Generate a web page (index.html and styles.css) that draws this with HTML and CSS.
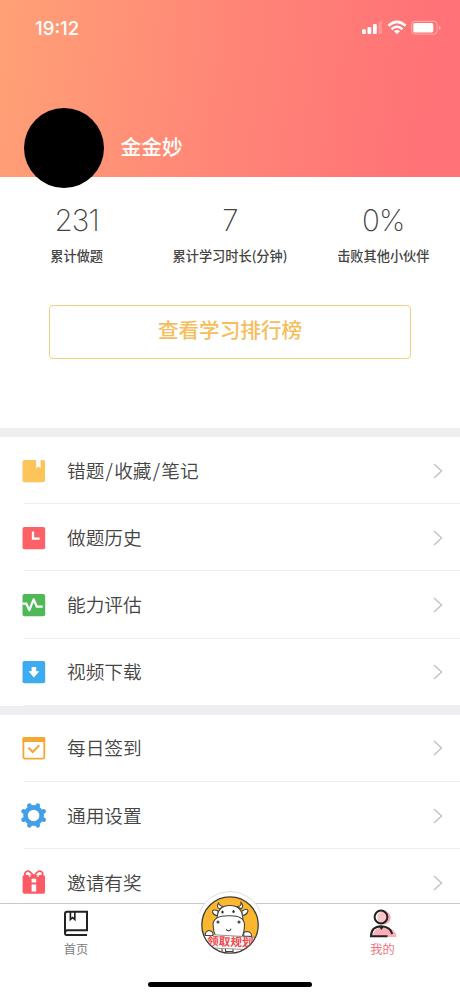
FILE: index.html
```html
<!DOCTYPE html>
<html lang="zh-CN">
<head>
    <meta charset="UTF-8">
    <title>我的</title>
    <link rel="stylesheet" href="styles.css">
</head>

<body>
    <div class="screen">
        <div class="header">
            <div class="status-bar">
                <span class="time">19:12</span>
                <svg class="status-icons" width="80" height="16" viewBox="0 0 80 16">
                    <g fill="#fff">
                        <rect x="1" y="9.3" width="3.8" height="4.7" rx="1"/>
                        <rect x="6.5" y="7" width="3.8" height="7" rx="1"/>
                        <rect x="12" y="4" width="3.8" height="10" rx="1"/>
                        <rect x="17.5" y="1.4" width="3.6" height="12.6" rx="1" opacity=".2"/>
                        <path d="M33 11.2 L36 14.3 L39 11.2 Q36 8.8 33 11.2Z"/>
                        <rect x="52.3" y="3" width="20" height="9.4" rx="1.6"/>
                        <path d="M78 5.7 V10 Q79.6 9.3 79.6 7.8 Q79.6 6.3 78 5.7Z" opacity=".5"/>
                    </g>
                    <g fill="none" stroke="#fff" stroke-width="2.5">
                        <path d="M27.4 5.8 Q36 -2 44.6 5.8"/>
                        <path d="M30.5 9.2 Q36 4.3 41.5 9.2"/>
                    </g>
                    <rect x="50.7" y="1.3" width="25.5" height="12.8" rx="3.4" fill="none" stroke="#fff" opacity=".4"/>
                </svg>
            </div>
            <div class="user">
                <div class="avatar"></div>
                <div class="name">金金妙</div>
            </div>
        </div>

        <div class="stats">
            <div class="stat">
                <div class="number">231</div>
                <div class="label">累计做题</div>
            </div>
            <div class="stat">
                <div class="number">7</div>
                <div class="label">累计学习时长(分钟)</div>
            </div>
            <div class="stat">
                <div class="number">0%</div>
                <div class="label">击败其他小伙伴</div>
            </div>
        </div>

        <div class="rank-button">查看学习排行榜</div>

        <div class="list">
            <div class="item">
                <svg class="icon" viewBox="0 0 26 26">
                    <path d="M3.5 2 H15.2 V10.5 L17.4 8.3 L19.6 10.5 V2 H22 Q24 2 24 4 V22.3 Q24 24.3 22 24.3 H3.5 Q1.5 24.3 1.5 22.3 V4 Q1.5 2 3.5 2Z" fill="#fdc45a"/>
                </svg>
                <div class="item-text">错题<span class="slash">/</span>收藏<span class="slash">/</span>笔记</div>
                <svg class="arrow" viewBox="0 0 10 16"><path d="M1 1 L8.5 8 L1 15"/></svg>
            </div>
            <div class="item">
                <svg class="icon" viewBox="0 0 26 26">
                    <rect x="1.5" y="2" width="22.7" height="22.3" rx="2" fill="#fb6166"/>
                    <path d="M12 6.5 V13.7 H18.7" fill="none" stroke="#fff" stroke-width="2.3"/>
                </svg>
                <div class="item-text">做题历史</div>
                <svg class="arrow" viewBox="0 0 10 16"><path d="M1 1 L8.5 8 L1 15"/></svg>
            </div>
            <div class="item">
                <svg class="icon" viewBox="0 0 26 26">
                    <rect x="1.5" y="2" width="22.7" height="22.3" rx="2" fill="#4fb957"/>
                    <path d="M1.5 11.7 H5.3 L8.4 18.2 L12.6 7.3 L15.8 14.7 H21.7" fill="none" stroke="#fff" stroke-width="2.2" stroke-linejoin="round"/>
                </svg>
                <div class="item-text">能力评估</div>
                <svg class="arrow" viewBox="0 0 10 16"><path d="M1 1 L8.5 8 L1 15"/></svg>
            </div>
            <div class="item">
                <svg class="icon" viewBox="0 0 26 26">
                    <rect x="1.5" y="2" width="22.7" height="22.3" rx="2" fill="#3eabf1"/>
                    <path d="M10.6 8 H15.2 V12.2 H18.3 L12.9 18.4 L7.5 12.2 H10.6Z" fill="#fff"/>
                </svg>
                <div class="item-text">视频下载</div>
                <svg class="arrow" viewBox="0 0 10 16"><path d="M1 1 L8.5 8 L1 15"/></svg>
            </div>
        </div>

        <div class="list list-last">
            <div class="item">
                <svg class="icon" viewBox="0 0 26 26">
                    <rect x="2.4" y="3" width="20.9" height="20.6" rx="1.5" fill="none" stroke="#f4a731" stroke-width="1.8"/>
                    <path d="M3 2 H22.7 Q24.2 2 24.2 3.5 V7 H1.5 V3.5 Q1.5 2 3 2Z" fill="#f4a731"/>
                    <path d="M7.5 12.7 L11.7 17 L18.3 10.2" fill="none" stroke="#f4a731" stroke-width="2"/>
                </svg>
                <div class="item-text">每日签到</div>
                <svg class="arrow" viewBox="0 0 10 16"><path d="M1 1 L8.5 8 L1 15"/></svg>
            </div>
            <div class="item">
                <svg class="icon" viewBox="0 0 26 26">
                    <circle cx="12.6" cy="12.5" r="8.1" fill="none" stroke="#429fe8" stroke-width="4.6"/>
                    <g stroke="#429fe8" stroke-width="4.6" stroke-linecap="round">
                        <path d="M16.3 3.9 L16.8 2.7 M8.9 3.9 L8.4 2.7 M16.3 21.1 L16.8 22.3 M8.9 21.1 L8.4 22.3"/>
                        <path d="M21.2 8.8 L22.6 8.3 M21.2 16.2 L22.6 16.7 M4 8.8 L2.6 8.3 M4 16.2 L2.6 16.7"/>
                    </g>
                </svg>
                <div class="item-text">通用设置</div>
                <svg class="arrow" viewBox="0 0 10 16"><path d="M1 1 L8.5 8 L1 15"/></svg>
            </div>
            <div class="item">
                <svg class="icon" viewBox="0 0 26 26">
                    <rect x="1.6" y="4.9" width="22.4" height="18.9" rx="1.8" fill="#fb5b64"/>
                    <path d="M12.8 6.3 Q9 .3 5.8 1.3 Q2.4 3.1 5 6.1 M12.8 6.3 Q16.6 .3 19.8 1.3 Q23.2 3.1 20.6 6.1" fill="none" stroke="#fb5b64" stroke-width="1.8"/>
                    <path d="M7 4.7 L10.4 5.9 L8.4 6.9Z M18.6 4.7 L15.2 5.9 L17.2 6.9Z M10.6 8.7 H15.2 V12.5 H10.6Z M10.6 14.5 H15.2 V21.4 H10.6Z" fill="#fff"/>
                </svg>
                <div class="item-text">邀请有奖</div>
                <svg class="arrow" viewBox="0 0 10 16"><path d="M1 1 L8.5 8 L1 15"/></svg>
            </div>
        </div>

        <div class="tab-bar">
            <div class="tab">
                <svg class="tab-icon" viewBox="0 0 30 30">
                    <g fill="none" stroke="#222" stroke-width="2">
                        <path d="M26 27 H5.5 Q4 27 4 25 V6 Q4 3.8 6.2 3.8 H26 V22.3 H6.5 Q4 22.3 4 25"/>
                        <path d="M9.4 4 V11.4 L11.6 9.5 L13.8 11.4 V4" stroke-width="1.7"/>
                    </g>
                </svg>
                <div class="tab-text">首页</div>
            </div>
            <div class="tab tab-active">
                <svg class="tab-icon" viewBox="0 0 30 30">
                    <circle cx="18" cy="9.8" r="6.8" fill="#f8b0b6"/>
                    <path d="M6.5 29 Q8 19.5 17 18.8 Q29 19 30.6 29Z" fill="#f8b0b6"/>
                    <g fill="none" stroke="#222" stroke-width="2">
                        <circle cx="15" cy="9" r="6.4" fill="#fff" fill-opacity=".25"/>
                        <path d="M21.5 28.2 H5 Q5.3 18.5 15.2 18.3 Q24.6 18.8 26.2 26"/>
                    </g>
                    <path d="M12.6 18 H18.2 L15.4 22Z" fill="#222"/>
                </svg>
                <div class="tab-text">我的</div>
            </div>
            <svg class="mascot" width="80" height="75" viewBox="0 0 80 75">
                <defs>
                    <clipPath id="face"><circle cx="40" cy="40" r="28"/></clipPath>
                </defs>
                <circle cx="40" cy="39" r="32.3" fill="#fff"/>
                <path d="M9.5 27.7 A32.5 32.5 0 0 1 70.5 27.7" fill="none" stroke="#ddd"/>
                <circle cx="40" cy="40" r="28" fill="#fcb72f"/>
                <g clip-path="url(#face)" stroke="#444" stroke-width="1.1" fill="#fff">
                    <path d="M29.5 24 Q26 22 28.5 18 Q30 21.5 33.5 21.5Z M47.5 21.5 Q51.5 21.5 51 17.5 Q54.5 21 51 24Z"/>
                    <path d="M28 26 Q22.5 23.5 22.5 27 Q23.5 30.5 28 30.5Z M52 26 Q57.5 22.5 58 26 Q57 30 52 30.5Z"/>
                    <path d="M27 36 Q26.5 20.5 40 20.5 Q53 20.5 53 36Z"/>
                    <path d="M26 52 Q23 46 23 39 Q24 30.3 39 30.7 Q53.5 30.3 54.5 39 Q54.5 47 52 52Z"/>
                    <path d="M24 60 H57 V72 H24Z"/>
                    <path d="M32 63 V72 M35.5 63 V66.5 H43 V63" fill="none"/>
                    <path d="M12 49 L68 52.5 L67.5 65 L11.5 62.5Z" stroke="#999"/>
                    <path d="M15 50.5 Q15.5 46 19 45.5 Q23.5 46 23 50.5Z M54 51 Q52.5 46.5 57 46.5 Q62 47 61.5 51.5Z"/>
                    <g fill="#222" stroke="none">
                        <ellipse cx="32.5" cy="27" rx="1.1" ry="1.6"/>
                        <ellipse cx="43.5" cy="26.5" rx="1.1" ry="1.6"/>
                    </g>
                    <g fill="#777"><circle cx="28" cy="37" r="1"/><circle cx="49" cy="37" r="1"/></g>
                    <path d="M36 44.5 Q39.5 47.5 41 43.8" fill="none"/>
                </g>
                <circle cx="40" cy="40" r="28.2" fill="none" stroke="#403b36" stroke-width="1.3"/>
                <g clip-path="url(#face)">
                    <text class="mascot-text" x="17" y="60" transform="rotate(2.5 17 60)">领取规划</text>
                </g>
            </svg>
            <div class="home-indicator"></div>
        </div>
    </div>
</body>
</html>
```

FILE: styles.css
```css
body {
    margin: 0;
    font-family: "Noto Sans CJK SC", sans-serif;
    color: #444;
    background: #fff;
}

.screen {
    width: 460px;
    height: 996px;
    display: flex;
    flex-direction: column;
    overflow: hidden;
}

.header {
    height: 177px;
    flex: none;
    background: linear-gradient(97deg, #ffa176 0%, #ff8577 50%, #ff7277 92%);
}

.status-bar {
    display: flex;
    justify-content: space-between;
    align-items: center;
    height: 56px;
    padding: 0 19px 0 35px;
    color: #fff;
}

.time {
    font: 550 18.6px/24px Inter, sans-serif;
}

.user {
    display: flex;
    align-items: center;
    padding: 52px 0 0 24px;
}

.avatar {
    width: 80px;
    height: 80px;
    border-radius: 50%;
    background: #000;
}

.name {
    margin: -5px 0 0 16.5px;
    font-size: 20.7px;
    font-weight: 500;
    line-height: 30px;
    color: #fff;
}

.stats {
    display: grid;
    grid-template-columns: repeat(3, 1fr);
    flex: none;
    height: 128px;
    text-align: center;
}

.number {
    padding-top: 24px;
    font: 200 29.5px/38px Inter, sans-serif;
    letter-spacing: -0.8px;
}

.label {
    margin-top: 7px;
    font-size: 13.2px;
    font-weight: 500;
    line-height: 20px;
}

.rank-button {
    flex: none;
    box-sizing: border-box;
    height: 54px;
    margin: 0 49px 69px;
    border: 1.5px solid #f3d080;
    border-radius: 4px;
    font-size: 20.6px;
    font-weight: 500;
    line-height: 47px;
    text-align: center;
    color: #f6bd5b;
}

.list {
    flex: none;
    border-top: 9px solid #eeeef0;
}

.list-last {
    flex: 1;
    min-height: 0;
    overflow: hidden;
}

.item {
    display: flex;
    align-items: center;
    height: 67.2px;
    padding: 0 17px 0 21px;
    background: linear-gradient(#eeeeef, #eeeeef) 24px 100% / 100% 1px no-repeat;
}

.icon {
    width: 26px;
    height: 26px;
}

.item-text {
    flex: 1;
    margin: -2px 0 0 20px;
    font-size: 18.7px;
    font-weight: 350;
    line-height: 28px;
}

.slash {
    display: inline-block;
    width: 9.8px;
    text-align: center;
}

.arrow {
    width: 10px;
    height: 16px;
    fill: none;
    stroke: #c4c4c6;
    stroke-width: 1.5;
}

.tab-bar {
    position: relative;
    display: flex;
    justify-content: space-between;
    flex: none;
    box-sizing: border-box;
    height: 93px;
    padding: 4px 62.5px 0 61px;
    border-top: 1px solid #c8c8ca;
    background: #fff;
}

.tab {
    display: flex;
    flex-direction: column;
    align-items: center;
    width: 30px;
}

.tab-icon {
    width: 30px;
    height: 30px;
    overflow: visible;
}

.tab-active .tab-icon {
    margin-left: -3px;
}

.tab-text {
    margin-top: 2px;
    font-size: 12.2px;
    line-height: 18px;
    white-space: nowrap;
    color: #808080;
}

.tab-active .tab-text {
    color: #f0737d;
}

.mascot {
    position: absolute;
    left: 190px;
    top: -19px;
}

.mascot-text {
    font-size: 11.6px;
    font-weight: 700;
    fill: #f04a50;
}

.home-indicator {
    position: absolute;
    left: 148px;
    bottom: 9px;
    width: 164px;
    height: 5px;
    border-radius: 3px;
    background: #000;
}
```
